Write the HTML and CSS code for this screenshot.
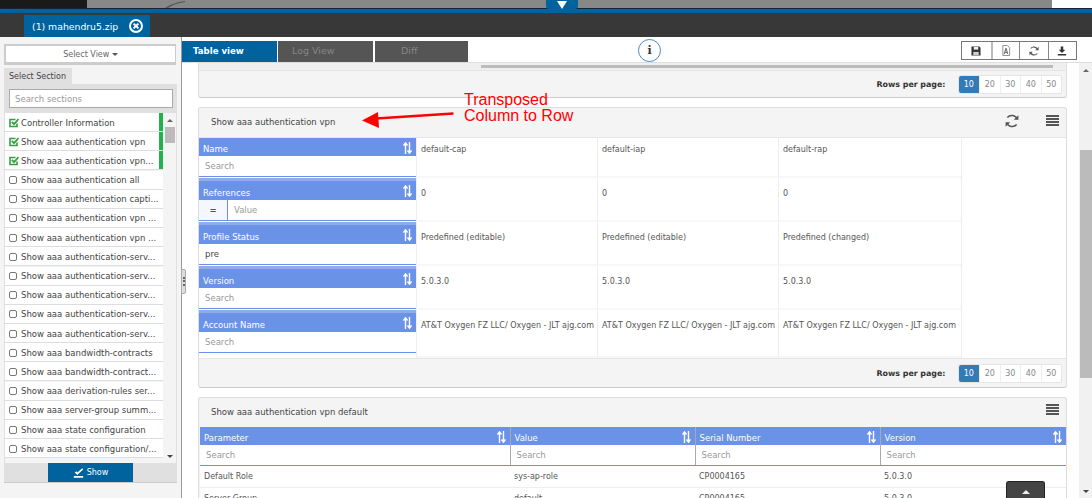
FILE: index.html
```html
<!DOCTYPE html>
<html lang="en">
<head>
    <meta charset="UTF-8">
    <title>Table view</title>
    <link rel="stylesheet" href="styles.css">
</head>
<body>

    <svg class="defs" width="0" height="0">
        <symbol id="sync" viewBox="0 0 12 12"><path d="M10.500 4.500A5 5 0 0 0 2 3M1.500 7.500A5 5 0 0 0 10 9" fill="none" stroke="#555" stroke-width="1.300"/><path d="M11.500 1v4h-4zM.5 11V7h4z" fill="#555"/></symbol>
        <symbol id="sort" viewBox="0 0 9 12"><path d="M2.500 12V1M.5 3.500L2.500 .8l2 2.700M6.500 0v11M4.500 8.500l2 2.700 2-2.700" fill="none" stroke="#fff" stroke-width="1.400"/></symbol>
        <symbol id="check" viewBox="0 0 10 10"><path d="M8 5.500v3H1V1.500h5.500" fill="none" stroke="#3a9d43" stroke-width="1.600"/><path d="M2.800 3.800L5 6.200 9.500 1" fill="none" stroke="#3a9d43" stroke-width="1.800"/></symbol>
    </svg>

    <div class="topstrip">
        <div class="strip-dark"></div>
        <div class="strip-grey">
            <svg class="smear" width="20" height="8" viewBox="0 0 20 8"><path d="M0 8C6 4 12 2 20 1v1C13 3 7 5 3 8z" fill="#555"/></svg>
            <div class="drop-tab"><svg width="10" height="8" viewBox="0 0 10 8"><path d="M0 0h10L5 8z" fill="#fff"/></svg></div>
        </div>
        <div class="strip-white"></div>
    </div>
    <div class="tabbar">
        <div class="file-tab">(1) mahendru5.zip
            <svg width="14" height="14" viewBox="0 0 14 14"><circle cx="7" cy="7" r="6" fill="none" stroke="#fff" stroke-width="2"/><path d="M4.600 4.600l4.800 4.800M9.400 4.600l-4.800 4.800" stroke="#fff" stroke-width="2"/></svg>
        </div>
    </div>

    <div class="main">
        <!-- left column -->
        <div class="sidebar">
            <div class="select-view"><div class="select-btn">Select View <span class="caret"></span></div></div>
            <div class="section-tab">Select Section</div>
            <div class="section-box">
                <div class="search-wrap"><input type="text" placeholder="Search sections"></div>
                <div class="list-wrap">
                    <ul class="section-list">
                        <li class="done"><svg class="tick" width="10" height="10"><use href="#check"/></svg>Controller Information</li>
                        <li class="done"><svg class="tick" width="10" height="10"><use href="#check"/></svg>Show aaa authentication vpn</li>
                        <li class="done"><svg class="tick" width="10" height="10"><use href="#check"/></svg>Show aaa authentication vpn...</li>
                        <li><i class="box"></i>Show aaa authentication all</li>
                        <li><i class="box"></i>Show aaa authentication capti...</li>
                        <li><i class="box"></i>Show aaa authentication vpn ...</li>
                        <li><i class="box"></i>Show aaa authentication vpn ...</li>
                        <li><i class="box"></i>Show aaa authentication-serv...</li>
                        <li><i class="box"></i>Show aaa authentication-serv...</li>
                        <li><i class="box"></i>Show aaa authentication-serv...</li>
                        <li><i class="box"></i>Show aaa authentication-serv...</li>
                        <li><i class="box"></i>Show aaa authentication-serv...</li>
                        <li><i class="box"></i>Show aaa bandwidth-contracts</li>
                        <li><i class="box"></i>Show aaa bandwidth-contract...</li>
                        <li><i class="box"></i>Show aaa derivation-rules ser...</li>
                        <li><i class="box"></i>Show aaa server-group summ...</li>
                        <li><i class="box"></i>Show aaa state configuration</li>
                        <li><i class="box"></i>Show aaa state configuration/...</li>
                    </ul>
                    <div class="list-scroll">
                        <span class="arrow-up"></span>
                        <div class="list-thumb"></div>
                        <span class="arrow-down"></span>
                    </div>
                </div>
                <div class="show-row"><div class="show-btn">
                    <svg width="11" height="10" viewBox="0 0 13 11"><path d="M1 9h11v2H1zM2 5l2-1.500L5 5l6-5 1 1.500L5 8z" fill="#fff"/></svg> Show</div></div>
            </div>
        </div>
        <div class="splitter"><div class="grip"><span></span></div></div>

        <!-- right column -->
        <div class="content">
            <div class="toolbar">
                <div class="view-tab active">Table view</div>
                <div class="view-tab">Log View</div>
                <div class="view-tab tab-diff">Diff</div>
                <div class="info">i</div>
                <div class="tools">
                    <div class="tool"><svg width="10" height="10" viewBox="0 0 11 11"><path d="M.5.5h8.500l1.500 1.500v8.500H.5z" fill="#333"/><path d="M3 1h5v3H3z" fill="#eee"/><path d="M2.500 6.500h6v3.500h-6z" fill="#ccc"/></svg></div>
                    <div class="tool"><svg width="10" height="11" viewBox="0 0 11 12"><path d="M2 .5h5l2.500 2.500v8.500H2z" fill="none" stroke="#888"/><path d="M3.500 10L5.500 3.500l2 6.500M4.200 8h2.600" fill="none" stroke="#555"/></svg></div>
                    <div class="tool"><svg width="10" height="10"><use href="#sync"/></svg></div>
                    <div class="tool"><svg width="10" height="10" viewBox="0 0 12 11"><path d="M4.500 0h3v4h2.500L6 8 2 4h2.500zM1 9h10v2H1z" fill="#333"/></svg></div>
                </div>
            </div>

            <div class="scroller">
                <div class="panels">
                    <div class="panel panel-cut">
                        <div class="hbar"><div class="hthumb"></div></div>
                        <div class="panel-foot foot-cut"><b>Rows per page:</b><div class="pager"><span class="on">10</span><span>20</span><span>30</span><span>40</span><span>50</span></div></div>
                    </div>

                    <div class="panel">
                        <div class="panel-head">
                            <span>Show aaa authentication vpn</span>
                            <svg class="head-sync" width="14" height="14"><use href="#sync"/></svg>
                            <div class="menu-icon"><i></i><i></i><i></i><i></i></div>
                        </div>
                        <div class="transposed">
                            <div class="t-row">
                                <div class="t-label">
                                    <div class="t-name">Name<svg class="sort" width="9" height="12"><use href="#sort"/></svg></div>
                                    <div class="t-filter"><input type="text" placeholder="Search"></div>
                                </div>
                                <div class="t-cell">default-cap</div>
                                <div class="t-cell">default-iap</div>
                                <div class="t-cell t-cell-last">default-rap</div>
                                <div class="t-rest"></div>
                            </div>
                            <div class="t-row">
                                <div class="t-label">
                                    <div class="t-name">References<svg class="sort" width="9" height="12"><use href="#sort"/></svg></div>
                                    <div class="t-filter"><div class="op">=</div><input type="text" placeholder="Value"></div>
                                </div>
                                <div class="t-cell">0</div>
                                <div class="t-cell">0</div>
                                <div class="t-cell t-cell-last">0</div>
                                <div class="t-rest"></div>
                            </div>
                            <div class="t-row">
                                <div class="t-label">
                                    <div class="t-name">Profile Status<svg class="sort" width="9" height="12"><use href="#sort"/></svg></div>
                                    <div class="t-filter"><input type="text" value="pre"></div>
                                </div>
                                <div class="t-cell">Predefined (editable)</div>
                                <div class="t-cell">Predefined (editable)</div>
                                <div class="t-cell t-cell-last">Predefined (changed)</div>
                                <div class="t-rest"></div>
                            </div>
                            <div class="t-row">
                                <div class="t-label">
                                    <div class="t-name">Version<svg class="sort" width="9" height="12"><use href="#sort"/></svg></div>
                                    <div class="t-filter"><input type="text" placeholder="Search"></div>
                                </div>
                                <div class="t-cell">5.0.3.0</div>
                                <div class="t-cell">5.0.3.0</div>
                                <div class="t-cell t-cell-last">5.0.3.0</div>
                                <div class="t-rest"></div>
                            </div>
                            <div class="t-row">
                                <div class="t-label">
                                    <div class="t-name">Account Name<svg class="sort" width="9" height="12"><use href="#sort"/></svg></div>
                                    <div class="t-filter"><input type="text" placeholder="Search"></div>
                                </div>
                                <div class="t-cell">AT&amp;T Oxygen FZ LLC/ Oxygen - JLT ajg.com</div>
                                <div class="t-cell">AT&amp;T Oxygen FZ LLC/ Oxygen - JLT ajg.com</div>
                                <div class="t-cell t-cell-last">AT&amp;T Oxygen FZ LLC/ Oxygen - JLT ajg.com</div>
                                <div class="t-rest"></div>
                            </div>
                        </div>
                        <div class="panel-foot foot-big"><b>Rows per page:</b><div class="pager"><span class="on">10</span><span>20</span><span>30</span><span>40</span><span>50</span></div></div>
                    </div>

                    <div class="panel">
                        <div class="panel-head head-2">
                            <span>Show aaa authentication vpn default</span>
                            <div class="menu-icon"><i></i><i></i><i></i><i></i></div>
                        </div>
                        <table class="plain">
                            <colgroup><col class="c1"><col class="c2"><col class="c3"><col></colgroup>
                            <thead>
                                <tr>
                                    <th>Parameter<svg class="sort" width="9" height="12"><use href="#sort"/></svg></th>
                                    <th>Value<svg class="sort" width="9" height="12"><use href="#sort"/></svg></th>
                                    <th>Serial Number<svg class="sort" width="9" height="12"><use href="#sort"/></svg></th>
                                    <th>Version<svg class="sort" width="9" height="12"><use href="#sort"/></svg></th>
                                </tr>
                                <tr class="filters">
                                    <td><input type="text" placeholder="Search"></td>
                                    <td><input type="text" placeholder="Search"></td>
                                    <td><input type="text" placeholder="Search"></td>
                                    <td><input type="text" placeholder="Search"></td>
                                </tr>
                            </thead>
                            <tbody>
                                <tr><td>Default Role</td><td>sys-ap-role</td><td>CP0004165</td><td>5.0.3.0</td></tr>
                                <tr><td>Server Group</td><td>default</td><td>CP0004165</td><td>5.0.3.0</td></tr>
                            </tbody>
                        </table>
                    </div>
                </div>
                <div class="page-scroll">
                    <span class="arrow-up"></span>
                    <div class="page-thumb"></div>
                    <span class="arrow-down"></span>
                </div>
            </div>
        </div>
    </div>

    <!-- annotation pasted on the screenshot -->
    <div class="note">Transposed<br>Column to Row</div>
    <svg class="note-arrow" width="92" height="20" viewBox="0 0 92 20"><path d="M14 8.500L91.500 3.500" stroke="#f00" stroke-width="2.500"/><path d="M0 10.500L16 2l1 16z" fill="#f00"/></svg>
    <div class="to-top"><span></span></div>

</body>
</html>
```

FILE: styles.css
```css
html, body {
    margin: 0;
    padding: 0;
    height: 498px;
    overflow: hidden;
}

body {
    position: relative;
    font-family: "DejaVu Sans", sans-serif;
    font-size: 8.5px;
    color: #555;
    background: #fff;
}

input {
    font-family: inherit;
    font-size: inherit;
    color: #444;
    border: none;
    outline: none;
    background: #fff;
    min-width: 0;
}

input::placeholder {
    color: #999;
    opacity: 1;
}

.defs {
    position: absolute;
}

.topstrip {
    display: flex;
    height: 8px;
    background: #888;
    border-bottom: 1px solid #12283a;
}

.strip-dark {
    width: 87px;
    background: #1a1a1a;
}

.strip-grey {
    flex: 1;
    display: flex;
    padding-left: 78px;
}

.smear {
    display: block;
}

.strip-white {
    width: 40px;
    background: #fff;
}

.drop-tab {
    width: 32px;
    height: 9px;
    margin-left: 361px;
    display: flex;
    align-items: center;
    justify-content: center;
    background: #00639e;
    border-radius: 0 0 3px 3px;
}

.tabbar {
    height: 28px;
    background: #383838;
    border-top: 4px solid #00639e;
    box-sizing: border-box;
    padding: 2px 0 0 24px;
}

.file-tab {
    display: flex;
    align-items: center;
    gap: 11px;
    width: 126px;
    height: 22px;
    box-sizing: border-box;
    padding-left: 8px;
    background: #00639e;
    color: #fff;
    font-size: 9.300px;
}

.main {
    display: flex;
    height: 461px;
}

/* left column */
.sidebar {
    width: 181px;
    flex: none;
    box-sizing: border-box;
    padding: 7px 4px 0 4px;
    background: #f4f4f4;
}

.select-view {
    height: 21px;
    padding: 2px 1px 3px 2px;
    box-sizing: border-box;
    background: #ccc;
    width: 172px;
}

.select-btn {
    height: 16px;
    line-height: 18px;
    background: #fff;
    text-align: center;
    color: #666;
    font-size: 8px;
}

.caret {
    display: inline-block;
    border: 3px solid transparent;
    border-top: 3px solid #555;
    border-bottom: 0;
    vertical-align: 1px;
}

.section-tab {
    width: 68px;
    height: 16px;
    line-height: 18px;
    margin-top: 3px;
    box-sizing: border-box;
    padding-left: 5px;
    background: #e0e0e0;
    color: #444;
    font-size: 8px;
}

.section-box {
    background: #e0e0e0;
    border-bottom: 1px solid #ccc;
    width: 173px;
    padding: 0 1px;
    box-sizing: border-box;
}

.search-wrap {
    padding: 5px 3px 5px 4px;
}

.search-wrap input {
    display: block;
    width: 100%;
    box-sizing: border-box;
    height: 19px;
    padding: 0 5px;
    border: 1px solid #aaa;
}

.list-wrap {
    display: flex;
    height: 350px;
    overflow: hidden;
    background: #f4f4f4;
}

.section-list {
    list-style: none;
    margin: 0;
    padding: 0;
    width: 158px;
    flex: none;
}

.section-list li {
    display: flex;
    align-items: center;
    height: 18px;
    margin-bottom: 1.200px;
    padding: 1px 0 0 4px;
    box-sizing: border-box;
    background: #fff;
    color: #444;
    white-space: nowrap;
    box-shadow: 0 1px 0 #ddd;
}

.section-list li.done {
    border-right: 4px solid #22b14c;
}

.tick {
    flex: none;
    margin-right: 2px;
}

.box {
    flex: none;
    width: 6px;
    height: 6px;
    border: 1px solid #777;
    border-radius: 2px;
    margin-right: 4px;
}

.list-scroll {
    flex: 1;
    display: flex;
    flex-direction: column;
    align-items: center;
}

.arrow-up, .arrow-down {
    flex: none;
    display: block;
    border: 3px solid transparent;
}

.arrow-up {
    border-bottom: 3px solid #666;
    border-top: 0;
    margin-top: 6px;
}

.arrow-down {
    border-top: 3px solid #444;
    border-bottom: 0;
    margin-top: auto;
    margin-bottom: 5px;
}

.list-thumb {
    width: 10px;
    height: 16px;
    margin-top: 5px;
    background: #bbb;
}

.show-row {
    height: 19px;
    background: #e0e0e0;
}

.show-btn {
    width: 85px;
    height: 19px;
    margin-left: 43px;
    display: flex;
    align-items: center;
    justify-content: center;
    gap: 3px;
    background: #00639e;
    color: #fff;
    font-size: 8px;
}

.splitter {
    flex: none;
    position: relative;
    width: 1px;
    background: #999;
}

.grip {
    position: absolute;
    left: 0;
    top: 232px;
    width: 5px;
    height: 25px;
    box-sizing: border-box;
    padding: 7px 0 0 1px;
    background: #ddd;
    border: 1px solid #aaa;
    border-radius: 0 2px 2px 0;
}

.grip span {
    display: block;
    width: 0;
    height: 9px;
    border-left: 2px dotted #666;
}

/* right column */
.content {
    flex: 1;
    min-width: 0;
    position: relative;
}

.toolbar {
    display: flex;
    height: 26px;
    padding-top: 4px;
    box-sizing: border-box;
    border-bottom: 1px solid #ddd;
    background: #fff;
}

.view-tab {
    width: 95px;
    height: 21px;
    margin-right: 1px;
    line-height: 20px;
    box-sizing: border-box;
    padding-left: 14px;
    background: #555;
    color: #858585;
    font-size: 9.500px;
}

.view-tab.active {
    padding-left: 11px;
    background: #00639e;
    color: #fff;
    font-weight: bold;
    font-size: 8.600px;
}

.tab-diff {
    width: 93px;
    margin-left: 1px;
    padding-left: 26px;
}

.info {
    width: 21px;
    height: 21px;
    margin: -2px 0 0 169px;
    line-height: 21px;
    border: 1.500px solid #4a8ac0;
    border-radius: 50%;
    text-align: center;
    font-family: "DejaVu Serif", serif;
    font-weight: bold;
    font-size: 11px;
    color: #333;
}

.tools {
    display: flex;
    margin-left: auto;
    margin-right: 15px;
    height: 19px;
    border: 1px solid #777;
    box-sizing: border-box;
}

.tool {
    width: 28.500px;
    box-sizing: border-box;
    display: flex;
    align-items: center;
    justify-content: center;
    border-left: 1px solid #888;
}

.tool:first-child {
    border-left: none;
}

.tool:nth-child(2) {
    border-left: 2px solid #bbb;
}

.scroller {
    display: flex;
    height: 435px;
    overflow: hidden;
}

.panels {
    width: 885px;
    box-sizing: border-box;
    padding-left: 16px;
    flex: none;
}

.page-scroll {
    width: 13px;
    margin-left: 12px;
    flex: none;
    display: flex;
    flex-direction: column;
    align-items: center;
    background: #f1f1f1;
}

.page-thumb {
    width: 12px;
    height: 228px;
    margin-top: 78px;
    background: #bbb;
}

.panel {
    background: #f4f4f4;
    border: 1px solid #ddd;
    border-bottom-color: #ccc;
    border-radius: 3px;
    margin-bottom: 9px;
}

.panel-cut {
    height: 35px;
    box-sizing: border-box;
    border-top: none;
    border-radius: 0 0 3px 3px;
}

.hbar {
    height: 8px;
    padding-top: 2px;
    box-sizing: border-box;
    background: #efefef;
    border-bottom: 1px solid #e5e5e5;
}

.hthumb {
    height: 3px;
    width: 572px;
    margin-left: 282px;
    background: #bbb;
}

.panel-foot {
    display: flex;
    align-items: center;
    justify-content: flex-end;
    gap: 12px;
    height: 29px;
    box-sizing: border-box;
    padding-right: 4px;
    color: #333;
    font-size: 7.900px;
}

.foot-cut {
    height: 26px;
}

.foot-big {
    border-top: 1px solid #e5e5e5;
}

.pager {
    display: flex;
    background: #fff;
    border: 1px solid #e5e5e5;
    border-radius: 2px;
}

.pager span {
    width: 20.500px;
    height: 17px;
    line-height: 17px;
    text-align: center;
    color: #888;
    box-sizing: border-box;
    border-left: 1px solid #eee;
    font-size: 8px;
}

.pager .on {
    background: #337ab7;
    color: #fff;
    border: none;
    border-radius: 2px 0 0 2px;
}

.panel-head {
    display: flex;
    align-items: center;
    height: 30px;
    box-sizing: border-box;
    padding: 0 7px 1px 12px;
    color: #444;
    border-bottom: 1px solid #e5e5e5;
}

.head-2 {
    height: 29px;
    border-bottom: none;
}

.head-sync {
    margin-left: auto;
    margin-top: -2px;
}

.menu-icon {
    margin-left: 27px;
    width: 13px;
    margin-top: -3px;
}

.head-2 .menu-icon {
    margin-left: auto;
    margin-top: -5px;
}

.menu-icon i {
    display: block;
    height: 2px;
    margin-bottom: 1px;
    background: #555;
}

.transposed {
    background: #fff;
}

.t-row {
    display: flex;
    align-items: stretch;
    height: 44px;
}

.t-row:first-child {
    height: 40px;
}

.t-row:last-child {
    height: 48px;
}

.t-label {
    flex: none;
    width: 217px;
    align-self: flex-start;
    border-top: 3px solid #90ade9;
    border-bottom: 1px solid #6a92e6;
}

.t-row:first-child .t-label {
    border-top: none;
}

.t-name, .plain th {
    background: #6a92e6;
    color: #fff;
    font-weight: normal;
    position: relative;
}

.t-name {
    height: 19px;
    line-height: 16px;
    box-sizing: border-box;
    padding: 4px 0 0 4px;
}

.t-row:first-child .t-name {
    height: 18px;
    padding-top: 3px;
}

.sort {
    position: absolute;
    right: 4px;
    top: 4px;
}

.t-filter {
    display: flex;
    height: 20px;
    background: #fff;
}

.t-filter input {
    flex: 1;
    padding: 0 6px;
    width: 100%;
}

.op {
    width: 29px;
    flex: none;
    text-align: center;
    line-height: 20px;
    background: #f4f8fe;
    border-right: 1px solid #6a92e6;
    box-sizing: border-box;
    font-weight: bold;
}

.t-cell {
    flex: none;
    width: 181px;
    box-sizing: border-box;
    padding: 11px 4px 0;
    border-left: 1px solid #eee;
    border-bottom: 2px solid #f7f7f7;
    white-space: nowrap;
    overflow: hidden;
    color: #555;
    font-size: 8px;
    line-height: 10px;
}

.t-row:first-child .t-cell {
    padding-top: 7px;
}

.t-cell-last {
    width: 183px;
}

.t-rest {
    flex: 1;
    border-left: 1px solid #eee;
}

table.plain {
    width: 866px;
    margin-left: 1px;
    border-collapse: collapse;
    table-layout: fixed;
    background: #fff;
}

.c1 { width: 310px; }
.c2 { width: 185px; }
.c3 { width: 185px; }

.plain th {
    height: 18px;
    padding: 3px 4px 0;
    box-sizing: border-box;
    text-align: left;
    border-left: 1px solid #aaa;
}

.plain th:first-child {
    border-left: none;
}

.plain .filters td {
    height: 20px;
    padding: 0;
    border-left: 1px solid #aaa;
    border-bottom: 1px solid #6a92e6;
}

.plain .filters td:first-child {
    border-left: none;
}

.plain .filters input {
    display: block;
    width: 100%;
    height: 19px;
    box-sizing: border-box;
    padding: 0 6px;
}

.plain tbody td {
    height: 21px;
    padding: 0 4px;
    border-bottom: 1px solid #eee;
    font-size: 8px;
    color: #555;
}

/* annotation and floating button */
.note {
    position: absolute;
    left: 464px;
    top: 92px;
    color: #f00;
    font-family: "Liberation Sans", sans-serif;
    font-size: 16px;
    line-height: 16px;
}

.note-arrow {
    position: absolute;
    left: 362px;
    top: 110px;
}

.to-top {
    position: absolute;
    left: 1006px;
    top: 481px;
    width: 39px;
    height: 17px;
    background: #444;
    border: 1px solid #222;
    border-bottom: none;
    border-radius: 3px 3px 0 0;
    box-sizing: border-box;
    display: flex;
    justify-content: center;
    padding-top: 8px;
}

.to-top span {
    width: 0;
    height: 0;
    border: 4px solid transparent;
    border-bottom: 4px solid #eee;
    border-top: 0;
}
```
